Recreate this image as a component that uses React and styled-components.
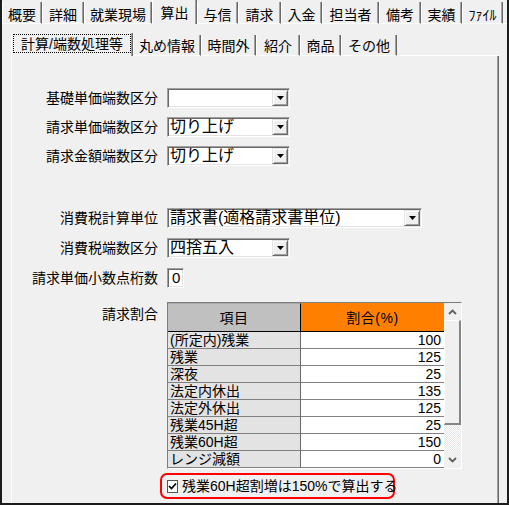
import React from 'react';
import styled, { createGlobalStyle } from 'styled-components';

const GlobalStyle = createGlobalStyle`
  html, body { margin: 0; padding: 0; background: #f0f0f0; }
  body { font-family: "Liberation Sans", "Noto Sans CJK JP", sans-serif; color: #000; }
  * { box-sizing: border-box; }
`;

const Frame = styled.div`
  width: 509px;
  height: 505px;
  border: 2px solid #1c1c1c;
  border-top: none;
  background: #f0f0f0;
  display: flex;
  flex-direction: column;
  overflow: hidden;
`;

const TabStrip = styled.div`
  display: flex;
  align-items: flex-end;
  height: ${p => p.$h}px;
  flex: none;
`;

const Tab = styled.div`
  flex: none;
  width: ${p => p.$w}px;
  height: ${p => (p.$active ? p.$h : p.$h - 2)}px;
  display: flex;
  justify-content: center;
  align-items: ${p => (p.$focus ? 'stretch' : 'center')};
  padding-top: ${p => p.$pt}px;
  font-size: 14px;
  line-height: 16px;
  white-space: nowrap;
  border-left: 1px solid #fff;
  border-right: 1px solid #696969;
  box-shadow: inset -1px 0 #a0a0a0;
  border-bottom: ${p => (p.$active ? 'none' : '1px solid #fff')};
`;

const FocusBox = styled.div`
  flex: 1;
  margin: -1px 1px 3px 1px;
  border: 1px dotted #000;
  display: flex;
  align-items: center;
  justify-content: center;
`;

const StripFill = styled.div`
  flex: 1;
  align-self: stretch;
  border-bottom: 1px solid #fff;
`;

const OuterPanel = styled.div`
  flex: 1;
  display: flex;
  flex-direction: column;
  padding: 9px 8px 0 9px;
  min-height: 0;
`;

const InnerPanel = styled.div`
  flex: 1;
  border-left: 1px solid #fff;
  border-right: 1px solid #696969;
  box-shadow: inset -1px 0 #a0a0a0;
  padding-top: 32px;
  display: flex;
  flex-direction: column;
`;

const Group = styled.div`
  display: flex;
  flex-direction: column;
  gap: ${p => p.$gap}px;
  margin-top: ${p => p.$mt || 0}px;
`;

const Row = styled.div`
  display: grid;
  grid-template-columns: 146px auto;
  column-gap: 9px;
  align-items: ${p => (p.$top ? 'start' : 'center')};
`;

const Label = styled.div`
  font-size: 14px;
  line-height: 20px;
  text-align: right;
  white-space: nowrap;
  padding-top: ${p => p.$pt || 0}px;
`;

const Select = styled.div`
  width: ${p => p.$w}px;
  height: 20px;
  background: #fff;
  border: 1px solid;
  border-color: #a0a0a0 #fff #fff #a0a0a0;
  box-shadow: inset 1px 1px #696969, inset -1px -1px #e3e3e3;
  display: flex;
  align-items: center;
`;

const SelectText = styled.div`
  flex: 1;
  font-size: 16px;
  line-height: 18px;
  padding-left: 2px;
  white-space: nowrap;
`;

const DropBtn = styled.div`
  width: 16px;
  height: 16px;
  margin-right: 1px;
  background: #f0f0f0;
  border: 1px solid;
  border-color: #e3e3e3 #696969 #696969 #e3e3e3;
  box-shadow: inset 1px 1px #fff, inset -1px -1px #a0a0a0;
  display: flex;
  align-items: center;
  justify-content: center;
`;

const NumBox = styled.div`
  width: 17px;
  height: 20px;
  background: #fff;
  border: 1px solid;
  border-color: #a0a0a0 #fff #fff #a0a0a0;
  box-shadow: inset 1px 1px #696969, inset -1px -1px #e3e3e3;
  font-size: 15px;
  line-height: 18px;
  padding-left: 4px;
`;

const GridBox = styled.div`
  width: 295px;
  height: 167px;
  display: flex;
  border: 1px solid;
  border-color: #7d7d7d #fff #fff #7d7d7d;
  background: #f0f0f0;
`;

const Table = styled.div`
  display: grid;
  grid-template-columns: 133px 143px;
  grid-template-rows: 29px;
  grid-auto-rows: 17px;
  align-content: start;
`;

const HeadCell = styled.div`
  background: ${p => p.$bg};
  border-bottom: 1px solid #000;
  border-right: ${p => (p.$sep ? '1px solid #000' : 'none')};
  border-top: 1px solid ${p => p.$hl};
  display: flex;
  align-items: center;
  justify-content: center;
  font-size: 14px;
  line-height: 16px;
  letter-spacing: 0.5px;
`;

const Cell = styled.div`
  background: ${p => (p.$num ? '#fff' : '#e3e3e3')};
  border-bottom: 1px solid #808080;
  border-right: ${p => (p.$num ? 'none' : '1px solid #696969')};
  font-size: 14px;
  line-height: 16px;
  text-align: ${p => (p.$num ? 'right' : 'left')};
  padding: ${p => (p.$num ? '0 3px 0 0' : '0 0 0 2px')};
  white-space: nowrap;
`;

const ScrollBar = styled.div`
  width: 17px;
  display: flex;
  flex-direction: column;
  background: #f0f0f0;
`;

const ScrollBtn = styled.div`
  height: 17px;
  flex: none;
  display: flex;
  align-items: center;
  justify-content: center;
`;

const Thumb = styled.div`
  height: 105px;
  flex: none;
  background: #f0f0f0;
  border-style: solid;
  border-width: 1px 2px 2px 1px;
  border-color: #fff #858585 #858585 #fff;
`;

const Track = styled.div`
  flex: 1;
  background: repeating-conic-gradient(#fff 0 25%, #e4e4e4 0 50%) 0 0 / 2px 2px;
`;

const CheckRow = styled.div`
  display: grid;
  grid-template-columns: 148px auto;
  margin-top: 4px;
`;

const Highlight = styled.div`
  grid-column: 2;
  width: 235px;
  height: 26px;
  border: 2.5px solid #ff0000;
  border-radius: 7px;
  display: flex;
  align-items: center;
  gap: 4px;
  padding-left: 5px;
`;

const CheckBox = styled.div`
  width: 13px;
  height: 13px;
  background: #fff;
  border: 1px solid #555;
  display: flex;
  align-items: center;
  justify-content: center;
`;

const CheckText = styled.div`
  font-size: 14px;
  line-height: 16px;
  white-space: nowrap;
`;

const topTabs = [
  { label: '概要', w: 40 },
  { label: '詳細', w: 42 },
  { label: '就業現場', w: 68 },
  { label: '算出', w: 45, active: true },
  { label: '与信', w: 41 },
  { label: '請求', w: 43 },
  { label: '入金', w: 41 },
  { label: '担当者', w: 57 },
  { label: '備考', w: 42 },
  { label: '実績', w: 41 },
  { label: 'ﾌｧｲﾙ', w: 41 },
];

const subTabs = [
  { label: '計算/端数処理等', w: 122, active: true },
  { label: '丸め情報', w: 68 },
  { label: '時間外', w: 55 },
  { label: '紹介', w: 44 },
  { label: '商品', w: 41 },
  { label: 'その他', w: 56 },
];

const rates = [
  ['(所定内)残業', 100],
  ['残業', 125],
  ['深夜', 25],
  ['法定内休出', 135],
  ['法定外休出', 125],
  ['残業45H超', 25],
  ['残業60H超', 150],
  ['レンジ減額', 0],
];

const Tri = () => (
  <svg width="7" height="4" viewBox="0 0 7 4">
    <polygon points="0,0 7,0 3.5,4" fill="#000" />
  </svg>
);

const Chevron = ({ up }) => (
  <svg width="9" height="6" viewBox="0 0 9 6">
    <polyline
      points={up ? '1,5 4.5,1.5 8,5' : '1,1 4.5,4.5 8,1'}
      fill="none"
      stroke="#606060"
      strokeWidth="1.8"
    />
  </svg>
);

const Combo = ({ w, value }) => (
  <Select $w={w}>
    <SelectText>{value}</SelectText>
    <DropBtn>
      <Tri />
    </DropBtn>
  </Select>
);

export default function App() {
  return (
    <>
      <GlobalStyle />
      <Frame>
        <TabStrip $h={24}>
          {topTabs.map(t => (
            <Tab key={t.label} $w={t.w} $h={24} $active={t.active} $pt={t.active ? 1 : 5}>
              {t.label}
            </Tab>
          ))}
          <StripFill />
        </TabStrip>
        <OuterPanel>
          <TabStrip $h={23}>
            {subTabs.map(t =>
              t.active ? (
                <Tab key={t.label} $w={t.w} $h={23} $active $focus $pt={2}>
                  <FocusBox>{t.label}</FocusBox>
                </Tab>
              ) : (
                <Tab key={t.label} $w={t.w} $h={23} $pt={1}>
                  {t.label}
                </Tab>
              )
            )}
            <StripFill />
          </TabStrip>
          <InnerPanel>
            <Group $gap={9}>
              <Row>
                <Label>基礎単価端数区分</Label>
                <Combo w={123} value="" />
              </Row>
              <Row>
                <Label>請求単価端数区分</Label>
                <Combo w={123} value="切り上げ" />
              </Row>
              <Row>
                <Label>請求金額端数区分</Label>
                <Combo w={123} value="切り上げ" />
              </Row>
            </Group>
            <Group $gap={10} $mt={42}>
              <Row>
                <Label>消費税計算単位</Label>
                <Combo w={255} value="請求書(適格請求書単位)" />
              </Row>
              <Row>
                <Label>消費税端数区分</Label>
                <Combo w={123} value="四捨五入" />
              </Row>
              <Row>
                <Label>請求単価小数点桁数</Label>
                <NumBox>0</NumBox>
              </Row>
            </Group>
            <Group $gap={0} $mt={14}>
              <Row $top>
                <Label $pt={2}>請求割合</Label>
                <GridBox>
                  <Table>
                    <HeadCell $bg="#c0c0c0" $hl="#a8a8a8" $sep>項目</HeadCell>
                    <HeadCell $bg="#ff8000" $hl="#ff8000">割合(%)</HeadCell>
                    {rates.map(([name, v]) => (
                      <React.Fragment key={name}>
                        <Cell>{name}</Cell>
                        <Cell $num>{v}</Cell>
                      </React.Fragment>
                    ))}
                  </Table>
                  <ScrollBar>
                    <ScrollBtn>
                      <Chevron up />
                    </ScrollBtn>
                    <Thumb />
                    <Track />
                    <ScrollBtn>
                      <Chevron />
                    </ScrollBtn>
                  </ScrollBar>
                </GridBox>
              </Row>
            </Group>
            <CheckRow>
              <Highlight>
                <CheckBox>
                  <svg width="9" height="8" viewBox="0 0 9 8">
                    <polyline points="1,4 3.5,6.5 8,1.5" fill="none" stroke="#000" strokeWidth="1.7" />
                  </svg>
                </CheckBox>
                <CheckText>残業60H超割増は150%で算出する</CheckText>
              </Highlight>
            </CheckRow>
          </InnerPanel>
        </OuterPanel>
      </Frame>
    </>
  );
}
